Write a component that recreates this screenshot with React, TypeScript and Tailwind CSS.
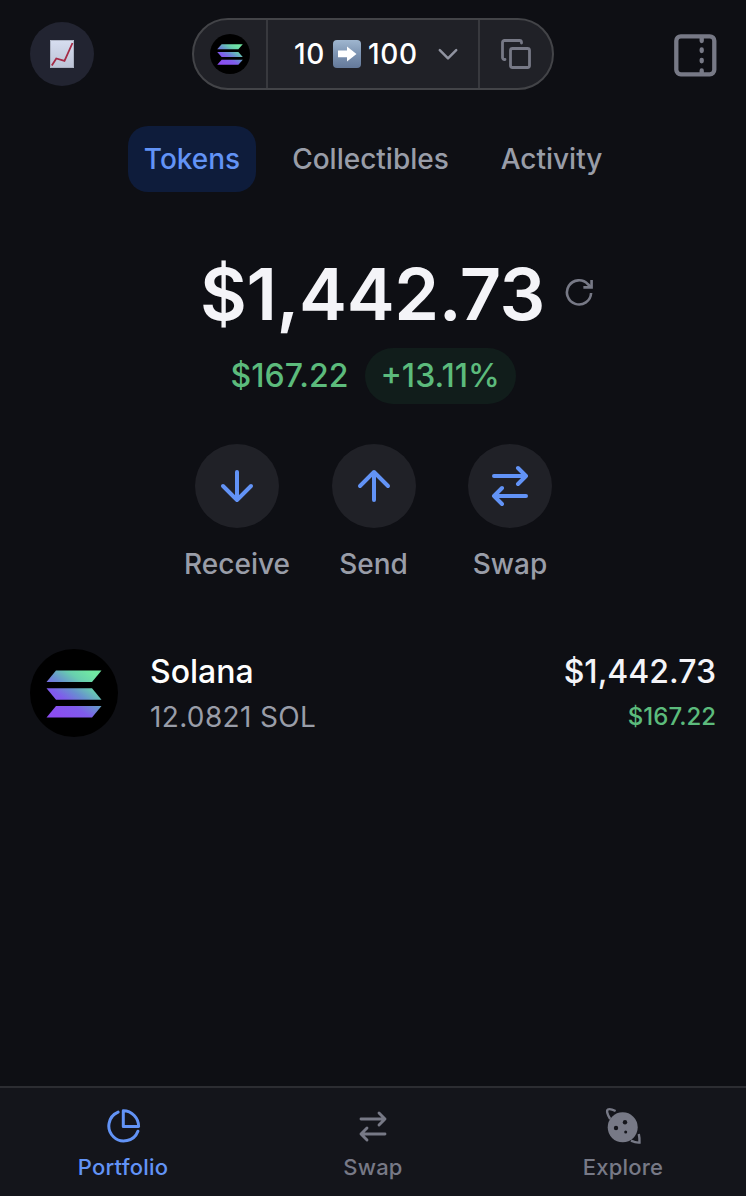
import type { ReactNode } from "react";

const tabs = [
  { label: "Tokens", box: "w-[128px] bg-[#0e1c3b] text-[#6293f6]" },
  { label: "Collectibles", box: "w-[189px] text-[#999da8]" },
  { label: "Activity", box: "w-[133px] text-[#999da8]" },
];

function SolanaMark({ id, className }: { id: string; className: string }) {
  return (
    <svg viewBox="0 0 56 48" className={className} preserveAspectRatio="none">
      <defs>
        <linearGradient id={id} x1="8" y1="52" x2="48" y2="-4" gradientUnits="userSpaceOnUse">
          <stop offset="0.1" stopColor="#8c4df0" />
          <stop offset="0.36" stopColor="#7f5cec" />
          <stop offset="0.53" stopColor="#6890cf" />
          <stop offset="0.72" stopColor="#68cfae" />
          <stop offset="0.9" stopColor="#70e8a2" />
        </linearGradient>
      </defs>
      <g fill={`url(#${id})`}>
        <path d="M10 0.5H55.5L46 12H0.5Z" />
        <path d="M0.5 18.3H46L55.5 29.7H10Z" />
        <path d="M10 36H55.5L46 47.5H0.5Z" />
      </g>
    </svg>
  );
}

function ChartEmoji() {
  return (
    <svg width="24" height="28" viewBox="0 0 24 28" fill="none">
      <defs>
        <linearGradient id="paper" x1="0" y1="0" x2="0" y2="28" gradientUnits="userSpaceOnUse">
          <stop stopColor="#d7def0" />
          <stop offset="1" stopColor="#bcc3d6" />
        </linearGradient>
      </defs>
      <rect width="24" height="28" fill="url(#paper)" />
      <path d="M0.5 0.5H23.5V27.5H0.5Z" stroke="#a5abba" strokeWidth="0.8" />
      <path d="M1.8 25.5L6.3 18.5L14.5 20.8L22.5 3" stroke="#a52a45" strokeWidth="1.8" />
    </svg>
  );
}

function ArrowEmoji() {
  return (
    <svg width="28" height="28" viewBox="0 0 28 28">
      <defs>
        <linearGradient id="tile" x1="0" y1="0" x2="0" y2="28" gradientUnits="userSpaceOnUse">
          <stop stopColor="#9fb6cf" />
          <stop offset="0.5" stopColor="#7d94b2" />
          <stop offset="1" stopColor="#64799a" />
        </linearGradient>
      </defs>
      <rect width="28" height="28" rx="4" fill="url(#tile)" />
      <path d="M5 10.5H14V6.5L23.5 14L14 21.5V17.3H5Z" fill="#fff" />
    </svg>
  );
}

function SwapIcon({ className, strokeWidth }: { className: string; strokeWidth: number }) {
  return (
    <svg
      viewBox="0 0 40 44"
      className={className}
      fill="none"
      stroke="currentColor"
      strokeWidth={strokeWidth}
      strokeLinecap="round"
      strokeLinejoin="round"
    >
      <path d="M4 12H36M28 4L36 12L28 20" />
      <path d="M36 32H4M12 24L4 32L12 40" />
    </svg>
  );
}

function PieIcon() {
  return (
    <svg
      width="36"
      height="36"
      viewBox="0 0 36 36"
      fill="none"
      stroke="currentColor"
      strokeWidth="3"
      strokeLinecap="round"
      strokeLinejoin="round"
      className="-ml-px"
    >
      <path d="M13.1 4.1A15 15 0 1 0 32.9 23.2" />
      <path d="M18.3 2.8V18.6H33.6A15.4 15.6 0 0 0 18.3 2.8Z" />
    </svg>
  );
}

function PlanetIcon() {
  return (
    <svg width="36" height="38" viewBox="0 0 36 38" fill="none">
      <path
        d="M5.2 12C2 7 1.4 3.4 2.9 2.5C4.3 1.8 7.3 2.5 10.6 4M33.8 27C34.5 30 34.6 33 34.5 35.6C31.8 35.8 28.9 35 26 33.6"
        stroke="currentColor"
        strokeWidth="2.4"
      />
      <circle cx="17.7" cy="20.3" r="15" fill="currentColor" />
      <circle cx="20" cy="15.3" r="2.2" fill="#14151b" />
      <circle cx="11" cy="21" r="2.2" fill="#14151b" />
      <circle cx="20.7" cy="25" r="1.5" fill="#14151b" />
    </svg>
  );
}

function ActionButton({ label, children }: { label: string; children: ReactNode }) {
  return (
    <div className="flex w-[136.5px] flex-col items-center">
      <button className="flex size-[84px] items-center justify-center rounded-full bg-[#202127] text-[#6293f6]">
        {children}
      </button>
      <span className="mt-[18px] text-[28px] leading-9 font-medium text-[#999da8]">
        {label}
      </span>
    </div>
  );
}

function NavItem({ label, active, children }: { label: string; active?: boolean; children: ReactNode }) {
  return (
    <button
      className={`flex w-[250px] shrink-0 flex-col items-center pt-[19px] ${active ? "text-[#6293f6]" : "text-[#777986]"}`}
    >
      <span className="flex h-[38px] items-center">{children}</span>
      <span className="mt-2 text-[22px] leading-7 font-medium tracking-[0.2px]">{label}</span>
    </button>
  );
}

export default function App() {
  return (
    <div className="flex h-[1196px] w-[746px] flex-col overflow-hidden bg-[#0e0f14] font-['Inter','Liberation_Sans',sans-serif]">
      <header className="flex items-center justify-between px-[30px] pt-[18px]">
        <button className="flex size-16 items-center justify-center rounded-full bg-[#222431]">
          <ChartEmoji />
        </button>

        <div className="flex h-[72px] w-[362px] overflow-hidden rounded-full border-2 border-[#434448] bg-[#202127]">
          <div className="flex w-[74px] items-center justify-center border-r-2 border-[#38393e]">
            <div className="flex size-10 items-center justify-center rounded-full bg-black">
              <SolanaMark id="sol-small" className="h-[21px] w-[26px]" />
            </div>
          </div>
          <div className="flex w-[212px] items-center border-r-2 border-[#38393e] pl-[26px] text-[28px] font-medium tracking-[0.6px] text-white">
            <span className="w-[39px]">10</span>
            <ArrowEmoji />
            <span className="ml-[7px] w-[50px]">100</span>
            <svg
              width="22"
              height="14"
              viewBox="0 0 22 14"
              fill="none"
              stroke="#9093a0"
              strokeWidth="2.5"
              strokeLinecap="round"
              strokeLinejoin="round"
              className="ml-[19px]"
            >
              <path d="M2.8 3.2L11 11.4L19.2 3.2" />
            </svg>
          </div>
          <div className="flex w-[72px] items-center justify-center">
            <svg
              width="32"
              height="32"
              viewBox="0 0 32 32"
              fill="none"
              stroke="#777986"
              strokeWidth="2.8"
              strokeLinecap="round"
              strokeLinejoin="round"
            >
              <rect x="10.5" y="10.5" width="19" height="19" rx="2" />
              <path d="M5 21.5H4.5A2 2 0 0 1 2.5 19.5V4.5A2 2 0 0 1 4.5 2.5H19.5A2 2 0 0 1 21.5 4.5V5" />
            </svg>
          </div>
        </div>

        <div className="flex w-16 justify-end">
          <svg
            width="44"
            height="44"
            viewBox="0 0 44 44"
            fill="none"
            stroke="#777986"
            strokeWidth="4.3"
            strokeLinecap="round"
            className="relative top-px left-px"
          >
            <rect x="3.3" y="3.3" width="38" height="38" rx="4.5" />
            <path d="M28.7 5V8M28.7 16.5V18M28.7 26.8V28.3M28.7 37.5V40" />
          </svg>
        </div>
      </header>

      <nav className="mt-9 flex justify-center gap-5">
        {tabs.map((tab) => (
          <button key={tab.label} className={`h-[66px] rounded-[20px] text-[28px] font-medium ${tab.box}`}>
            {tab.label}
          </button>
        ))}
      </nav>

      <section className="mt-[60px] flex flex-col items-center">
        <div className="flex h-[84px] items-center gap-5 pl-[48px]">
          <h1 className="text-[72px] leading-[84px] font-semibold tracking-[-0.4px] text-[#f4f4f8]">$1,442.73</h1>
          <svg
            width="29"
            height="29"
            viewBox="0 0 30 30"
            fill="none"
            stroke="#777986"
            strokeWidth="2.7"
            className="relative -top-0.5"
          >
            <path d="M27 15.5A12.5 12.5 0 1 1 23.8 6.5L26.5 9" />
            <path d="M27.5 2V9.7H19" />
          </svg>
        </div>
        <div className="mt-3 flex h-14 items-center gap-4 text-[32px] font-medium text-[#5cbb7c]">
          <span className="tracking-[0.1px]">$167.22</span>
          <span className="flex h-14 w-[151px] items-center justify-center rounded-full bg-[#111d1b]">
            +13.11%
          </span>
        </div>
      </section>

      <section className="mt-10 flex justify-center pl-px">
        <ActionButton label="Receive">
          <svg width="36" height="36" viewBox="0 0 36 36" fill="none" stroke="currentColor" strokeWidth="4" strokeLinecap="round" strokeLinejoin="round">
            <path d="M18 4V32M4 18L18 32L32 18" />
          </svg>
        </ActionButton>
        <ActionButton label="Send">
          <svg width="36" height="36" viewBox="0 0 36 36" fill="none" stroke="currentColor" strokeWidth="4" strokeLinecap="round" strokeLinejoin="round">
            <path d="M18 32V4M4 18L18 4L32 18" />
          </svg>
        </ActionButton>
        <ActionButton label="Swap">
          <SwapIcon className="h-11 w-10" strokeWidth={4} />
        </ActionButton>
      </section>

      <section className="mt-[67px] flex h-[88px] items-center px-[30px]">
        <div className="flex size-[88px] items-center justify-center rounded-full bg-black pt-0.5">
          <SolanaMark id="sol-large" className="h-12 w-14" />
        </div>
        <div className="ml-8 flex flex-1 flex-col pt-0.5">
          <span className="text-[32px] leading-[46px] font-medium text-white">Solana</span>
          <span className="text-[28px] leading-[44px] tracking-[0.35px] text-[#999da8]">12.0821 SOL</span>
        </div>
        <div className="flex flex-col items-end pt-0.5">
          <span className="text-[32px] leading-[46px] font-medium text-[#f4f4f8]">$1,442.73</span>
          <span className="text-[24px] leading-[44px] font-medium text-[#5cbb7c]">$167.22</span>
        </div>
      </section>

      <footer className="mt-auto flex h-[110px] justify-center border-t-2 border-[#2c2d32] bg-[#14151b]">
        <NavItem label="Portfolio" active>
          <PieIcon />
        </NavItem>
        <NavItem label="Swap">
          <SwapIcon className="h-[33px] w-[30px]" strokeWidth={3.8} />
        </NavItem>
        <NavItem label="Explore">
          <PlanetIcon />
        </NavItem>
      </footer>
    </div>
  );
}
